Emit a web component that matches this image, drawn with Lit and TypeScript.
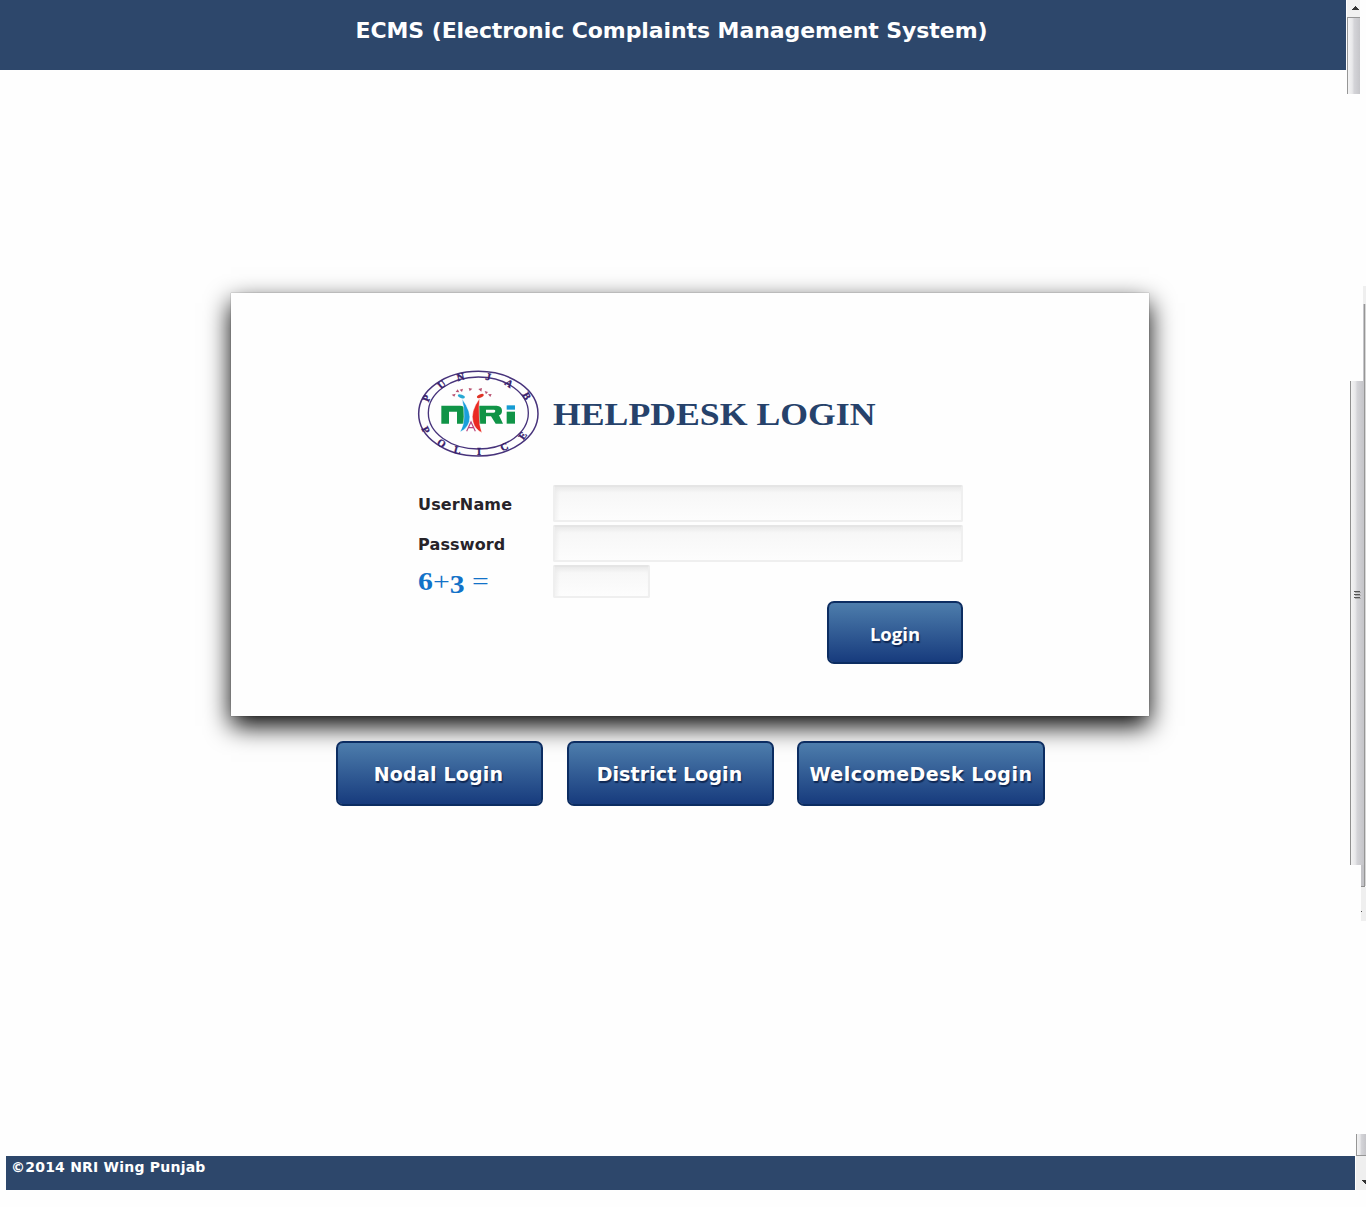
import { LitElement, html, svg, css } from "lit";
import { customElement } from "lit/decorators.js";

const RING_LETTERS: Array<[string, number, number, number]> = [
  ["P", 50, 103, -68],
  ["U", 95, 62, -38],
  ["N", 152, 39, -14],
  ["J", 235, 38, 12],
  ["A", 297, 58, 35],
  ["B", 350, 96, 62],
  ["P", 47, 198, 62],
  ["O", 94, 238, 35],
  ["L", 142, 258, 14],
  ["I", 207, 264, 0],
  ["C", 283, 249, -25],
  ["E", 338, 215, -55],
];

@customElement("nri-logo")
export class NriLogo extends LitElement {
  static styles = css`
    :host { display: block; width: 136px; height: 100px; }
    .mark { display: block; }
    .ring { fill: none; stroke: #47337b; stroke-width: 4.5; }
    .inner { stroke-width: 4; }
    .letter {
      font: bold 31px "Liberation Serif", serif;
      fill: #38206c;
      stroke: #38206c;
      stroke-width: 1;
      text-anchor: middle;
    }
  `;

  render() {
    return html`<svg class="mark" width="136" height="100" viewBox="0 0 408 300">
      <ellipse class="ring" cx="205" cy="149" rx="179" ry="127" />
      <ellipse class="ring inner" cx="205" cy="147" rx="150" ry="108" />
      ${RING_LETTERS.map(
        ([ch, x, y, r]) => svg`<g transform="translate(${x} ${y}) rotate(${r})"><text class="letter" y="10">${ch}</text></g>`,
      )}
      <path d="M94 179V125H150Q164 125 164 138V179H141V143H117V179Z" fill="#109447" />
      <path d="M207 125H260Q276 127 276 140Q276 151 267 154L279 179H257L243 157H228V179H207ZM228 137V146H251Q256 146 256 141Q256 137 251 137Z" fill="#109447" fill-rule="evenodd" />
      <rect x="290" y="143" width="25" height="36" fill="#109447" />
      <rect x="290" y="124" width="25" height="13" fill="#159bd3" />
      <path d="M156 104Q186 145 178 173Q171 195 150 204Q163 181 162 158Q163 132 156 104Z" fill="#1a9fdc" stroke="#fff" stroke-width="1.500" />
      <path d="M209 103Q180 143 189 174Q195 197 216 206Q207 183 208 156Q206 130 209 103Z" fill="#ea2a22" stroke="#fff" stroke-width="1.500" />
      <ellipse cx="154" cy="97" rx="11" ry="5" transform="rotate(20 154 97)" fill="#28a9d4" />
      <ellipse cx="211" cy="96" rx="11" ry="5" transform="rotate(-25 211 96)" fill="#df3426" />
      <path d="M170 202L183 174L196 202M174 191H192" fill="none" stroke="#b8437d" stroke-width="3.500" />
      <g fill="#b95372">
        <path d="M125 92l12-3-4 9zM137 84l6-8 5 9zM149 77l10-3-3 10zM176 72l11 2-8 8zM205 75l11-3-2 11zM224 81l10 3-6 7zM234 91l11-1-4 9z" />
      </g>
    </svg>`;
  }
}

@customElement("scroll-rail")
export class ScrollRail extends LitElement {
  static styles = css`
    :host { display: block; width: 20px; height: 1207px; }
    .rail { display: block; }
  `;

  render() {
    return html`<svg class="rail" width="20" height="1207" shape-rendering="crispEdges">
      <defs>
        <linearGradient id="thumb">
          <stop offset="0" stop-color="#f6f6f6" />
          <stop offset=".4" stop-color="#e8e8ea" />
          <stop offset=".55" stop-color="#d4d4d8" />
          <stop offset="1" stop-color="#c6c6ca" />
        </linearGradient>
      </defs>
      <rect x="1" width="13" height="17" fill="#f1f1f1" />
      <rect x="1" y="17" width="13" height="77" fill="url(#thumb)" />
      <path d="M1.5 94V17.5H14" fill="none" stroke="#969696" />
      <path d="M6 10L9.500 6L13 10Z" fill="#333" />

      <rect x="17" y="286" width="3" height="18" fill="#efefef" />
      <rect x="17" y="304" width="1" height="582" fill="#c6c6ca" />
      <rect x="18" y="304" width="1" height="582" fill="#969696" />
      <rect x="19" y="304" width="1" height="582" fill="#d6d6d6" />
      <rect x="4" y="381" width="13" height="484" fill="url(#thumb)" />
      <rect x="4" y="381" width="1" height="484" fill="#8f8f8f" />
      <rect x="15" y="865" width="3" height="21" fill="#c2c2c6" />
      <rect x="15" y="887" width="5" height="34" fill="#efefef" />
      <rect x="15" y="886" width="4" height="1" fill="#8f8f8f" />
      <rect x="15" y="911" width="1" height="1" fill="#555" />
      <path d="M8 591.500H14M8 594.500H14M8 597.500H14" stroke="#555" />
      <path d="M9 592.500H15M9 595.500H15M9 598.500H15" stroke="#aaa" />

      <rect x="10" y="1134" width="10" height="22" fill="url(#thumb)" />
      <rect x="10" y="1156" width="10" height="34" fill="#efefef" />
      <path d="M10.500 1134V1155.500H20" fill="none" stroke="#969696" />
      <path d="M15 1180H20V1184H19Z" fill="#333" />
    </svg>`;
  }
}

@customElement("app-root")
export class AppRoot extends LitElement {
  static styles = css`
    :host { display: block; font-family: "DejaVu Sans", Verdana, sans-serif; font-weight: bold; }
    .page {
      display: grid;
      grid-template-columns: 1346px 20px;
      width: 1366px;
      height: 1207px;
      overflow: hidden;
      background: #fefefe;
    }
    .column { display: flex; flex-direction: column; min-width: 0; }
    .header {
      box-sizing: border-box;
      height: 70px;
      flex: none;
      padding: 18px 3px 0 0;
      background: #2d476b;
      color: #fff;
      text-align: center;
      font-size: 22px;
      line-height: 26px;
      letter-spacing: -0.08px;
      white-space: nowrap;
    }
    .fit { display: inline-block; transform-origin: 0 50%; white-space: nowrap; }
    .wide { transform: scaleX(1.152); }
    .main { flex: 1; padding: 223px 0 0 231px; }
    .card {
      box-sizing: border-box;
      width: 918px;
      height: 423px;
      padding: 72px 186px 0 187px;
      background: #fefefe;
      box-shadow: 0 10px 24px 0 #000, 0 0 1px #888;
    }
    .brand { display: flex; align-items: center; height: 100px; margin: -1px 0 0 -8px; }
    .title {
      margin: 2px 0 0 7px;
      font: bold 31px/40px "Liberation Serif", serif;
      color: #26426b;
    }
    .form {
      display: grid;
      grid-template-columns: 135px 410px;
      grid-template-rows: 38px 38px 34px 63px;
      row-gap: 2px;
      margin: 21px 0 0 0;
      align-items: center;
    }
    .label { padding-top: 1px; color: #272329; font-size: 16px; line-height: 20px; letter-spacing: 0.15px; }
    .sum { color: #1272c8; font: bold 25px/30px "Liberation Serif", serif; }
    .stretch { transform: scaleX(1.19); }
    .thin { font-weight: normal; }
    .low { position: relative; top: 3px; }
    .field {
      box-sizing: border-box;
      width: 410px;
      height: 37px;
      margin: 0;
      padding: 0 8px;
      border: 2px solid #efefef;
      border-top-color: #e5e5e5;
      border-radius: 2px;
      background: linear-gradient(#f6f6f6, #fdfdfd);
      box-shadow: inset 2px 3px 4px rgba(0, 0, 0, 0.05);
      outline: none;
      align-self: start;
    }
    .short { width: 97px; height: 33px; }
    .btn {
      box-sizing: border-box;
      height: 65px;
      padding: 1px 0 0;
      border: 2px solid #0c2d62;
      border-radius: 7px;
      background: linear-gradient(#4d7dac, #173b7d);
      background-clip: padding-box;
      background-color: #0c2d62;
      color: #fff;
      font: bold 19px/24px "DejaVu Sans", Verdana, sans-serif;
      text-shadow: 1px 2px 1px rgba(5, 25, 65, 0.75);
      white-space: nowrap;
      text-align: center;
    }
    .submit {
      grid-column: 2;
      justify-self: end;
      width: 136px;
      height: 63px;
      padding-top: 3px;
      font: bold 18.500px/24px "Open Sans", sans-serif;
    }
    .links { display: flex; gap: 24px; padding: 25px 0 0 105px; }
    .nodal { width: 207px; padding-right: 2px; letter-spacing: 0.2px; }
    .district { width: 207px; padding-right: 2px; letter-spacing: 0.1px; }
    .welcome { width: 248px; margin-left: -1px; letter-spacing: 0.48px; }
    .footer {
      box-sizing: border-box;
      flex: none;
      height: 34px;
      margin: 0 -9px 17px 6px;
      padding: 2px 0 0 5px;
      background: #2d476b;
      color: #fff;
      font-size: 14px;
      line-height: 18px;
      letter-spacing: 0.22px;
    }
  `;

  render() {
    return html`
      <div class="page">
        <div class="column">
          <header class="header">ECMS (Electronic Complaints Management System)</header>
          <main class="main">
            <section class="card">
              <div class="brand">
                <nri-logo></nri-logo>
                <h1 class="title"><span class="fit wide">HELPDESK LOGIN</span></h1>
              </div>
              <form class="form" @submit=${(e: Event) => e.preventDefault()}>
                <label class="label" for="user">UserName</label>
                <input class="field" id="user" type="text" />
                <label class="label" for="pass">Password</label>
                <input class="field" id="pass" type="password" />
                <label class="sum" for="answer"><span class="fit stretch">6<span class="thin">+</span><span class="low">3</span><span class="thin"> =</span></span></label>
                <input class="field short" id="answer" type="text" />
                <button class="btn submit" type="submit">Login</button>
              </form>
            </section>
            <nav class="links">
              <button class="btn nodal">Nodal Login</button>
              <button class="btn district">District Login</button>
              <button class="btn welcome">WelcomeDesk Login</button>
            </nav>
          </main>
          <footer class="footer">©2014 NRI Wing Punjab</footer>
        </div>
        <scroll-rail></scroll-rail>
      </div>
    `;
  }
}
